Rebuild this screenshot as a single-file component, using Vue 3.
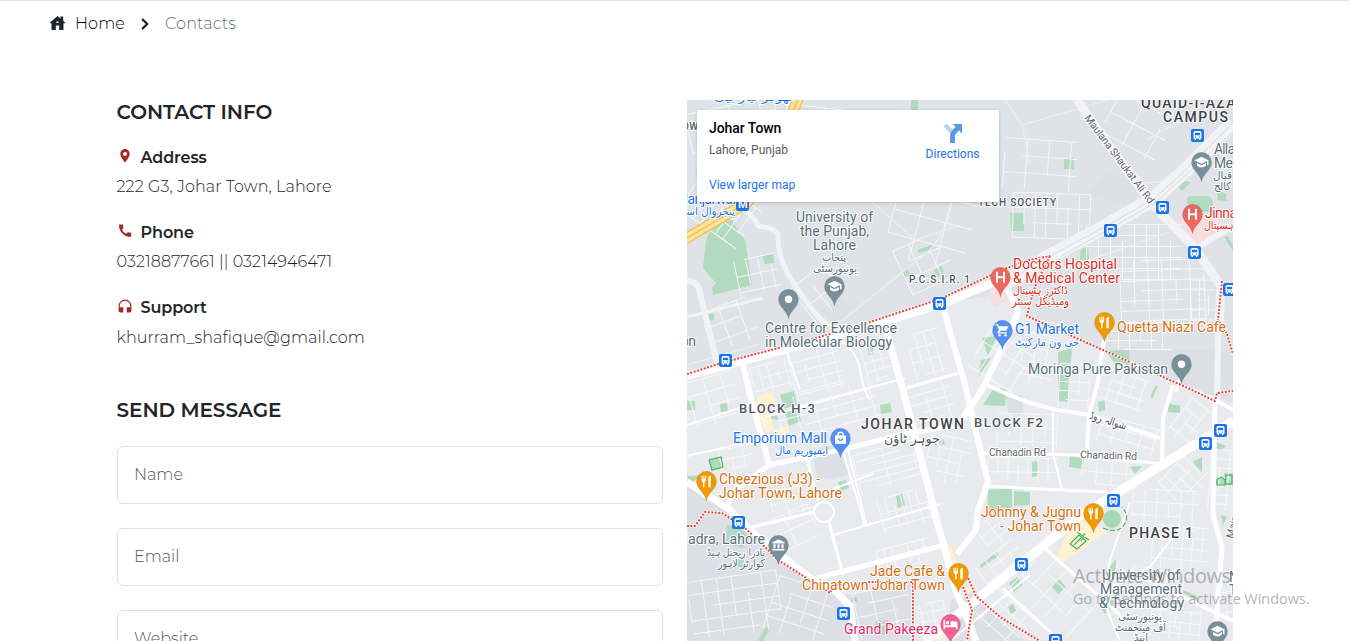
<script setup>
const contacts = [
  { icon: 'pin', title: 'Address', cls: 'addr', text: '222 G3, Johar Town, Lahore' },
  { icon: 'phone', title: 'Phone', cls: 'tel', text: '03218877661 || 03214946471' },
  { icon: 'headset', title: 'Support', cls: 'mail', text: 'khurram_shafique@gmail.com' },
]
const fields = ['Name', 'Email', 'Website']

// Residential blocks south of the rail line
const blocks = [
  'M687 376 845 332 940 304 1012 292 1028 317 1103 350 1190 390 1233 402V641H860L840 600 780 556 735 512 687 484Z',
]
const shades = [
  'M687 485 735 512 787 560 840 600 860 641H687Z',
  'M1095 185 1110 173 1142 186 1130 205 1088 196Z',
  'M812 450 839 444 848 475 818 482Z',
  'M1005 395h18v22l-14-4Z',
  'M842 596 912 583V641H858Z',
  'M1103 350 1190 390 1233 402V350H1120Z',
  'M950 600 975 590 1025 641H950Z',
  'M820 310 840 300 852 308 835 327Z',
]
const parks = [
  'M714 222 732 220 739 232 745 240 752 285 713 295 712 288 716 283 703 268 706 240Z',
  'M762 255l11-1 1 9-9 1Z', 'M705 314h9v6l-7 1Z', 'M911 100h7v10h-7Z',
  'M1064 158h10v11h-10Z', 'M1010 213h14v18h-13Z', 'M1176 185l10-8 4 6-8 8Z',
  'M1187 199c0-4 6-3 10-3h11q5 1 5 8l-3 8h-17q-6-3-6-13Z',
  'M1218 190l8 4 1 7-10-1Z', 'M1224 237l4-1 5 9v6Z',
  'M902 271l6-2 2 6-6 2Z', 'M917 250l15-5 3 3-15 5Z', 'M934 270l8-4 2 9-8 2Z',
  'M1081 249l7-2 1 13h-9Z', 'M868 346l5-1v9l-5 1Z',
  'M1105 351l24-1 1 15-16-3Z', 'M1058 352l14-4-4 54-10-1Z', 'M982 338l15-2-9 20Z',
  'M981 360l10-2-13 19Z', 'M780 395l14-4 7 30-12 5Z', 'M771 414l8 2v4l-8-1Z',
  'M687 401h8v9h-8Z', 'M720 404l7-1 1 8-7 1Z', 'M880 405l10-2 2 9-11 2Z',
  'M709 459l13-3 1 12-12 3Z', 'M687 476l15-1-12 9Z', 'M838 482l8-2 3 8-8 3Z',
  'M896 496l6-2 3 11-7 3Z', 'M939 440l4-2 2 6-5 2Z', 'M994 388l12 1-1 17-22-1Z',
  'M1098 402l7-2v10l-6 2Z', 'M1167 402l4 2 9 2v7l-12-1Z', 'M1150 397l5-11 3-1-5 13Z',
  'M1032 462l6-1v15l-6 1Z', 'M1070 456l12 2v11l-13-2Z', 'M1130 467l12-1-7 8Z',
  'M1193 462l9-5v16Z', 'M1216 442l10 4-5 5-6-2Z', 'M988 490l24-2v20l-25 5Z',
  'M1014 491l16 1v13l-16 1Z', 'M1224 473h9v12h-9Z', 'M1216 476h10v9h-11Z',
  'M980 564l17-12 1 4-17 12Z', 'M1009 583l8-6 6 7-9 8Z', 'M1051 586l8-7 7 8-8 7Z',
  'M1106 571l10-12-1 20Z', 'M1099 605l12-10 4 9-10 10Z', 'M1183 590l14 6 1 5-15-8Z',
  'M1008 607l5-3 3 7-5 3Z', 'M758 641l8-14 4 1-7 13Z', 'M727 525l12 2 12 12-9 9-16-5Z',
  'M852 598l5-1v5h-6Z', 'M875 622l13-2-4 15-8-1Z', 'M1221 515l6 2-4 8Z', 'M737 559l7-1v9h-6Z',
]
const sands = [
  'M758 396l15-4 3 10-8 3 6 25-7 3-12-24Z', 'M775 430l13-4 1 6-14 4Z',
  'M1068 531l15-10 24 9-30 24-22 8Z', 'M946 546l4-2 9 24-3 4Z', 'M962 590l12-7 2 5-13 9Z',
  'M1057 556l7-4 3 8-8 3Z', 'M930 637l22-14 3 5-17 13Z',
]
// Softer roads crossing the northern districts
const softRoads = [
  ['M742 208Q756 218 758 226 775 228 778 234Q777 253 787 272T820 319L838 331', 5],
  ['M687 281Q699 280 701 298L717 363', 6], ['M687 317 763 298', 3],
  ['M1077 100 1110 147 1153 205 1195 248 1221 286 1219 327', 9],
  ['M1000 286 1050 256 1110 224 1155 198 1190 166 1233 123', 15],
  ['M1190 252 1233 226', 6], ['M1219 290 1217 401', 6],
]
const mainRoads = [
  ['M687 376 725 366 845 333 940 305 1000 280', 8],
  ['M743 365 752 402 769 464', 6], ['M887 333 904 394 927 482 935 514 956 590 976 641', 7],
  ['M943 307 965 385 976 432 988 482 978 510 976 530 957 554', 6],
  ['M1008 290 1018 312 1001 350 982 390 959 424', 6],
  ['M962 424 900 435 845 449 769 465 735 490 725 509', 5],
  ['M1233 421 1160 466 1080 516 1027 559 925 641', 9],
  ['M984 486 1040 489 1107 492', 3], ['M985 384 1007 394 1027 402 1057 410 1089 415 1160 438', 4],
  ['M1104 340 1097 385 1089 415 1087 453', 4], ['M1173 385 1163 418 1162 463', 4],
  ['M980 453 1083 455 1162 464', 3], ['M1053 411 1053 453 1062 490', 2],
  ['M1215 398 1213 515 1222 547 1215 640', 5],
  ['M687 482 730 510 755 535 787 560 813 580', 7], ['M813 580 830 586 850 606 855 641', 7],
  ['M813 579 945 545', 5], ['M748 528 814 512', 3], ['M829 522 843 575', 3],
  ['M807 458 818 501', 3], ['M843 452 862 515', 2], ['M848 450 867 527', 2],
  ['M903 389 958 373', 3], ['M1043 547 1093 591 1122 617', 3], ['M1003 589 1060 641', 3],
  ['M1130 570 1172 592 1233 621', 4], ['M1110 588 1150 567 1178 530', 2],
  ['M1130 502 1110 560 1103 600 1120 641', 2], ['M950 641 1030 575', 2],
  ['M1183 365 1176 392', 3], ['M1193 390 1215 400 1233 410', 4],
  ['M687 425 749 405', 2], ['M687 456 766 438', 2], ['M765 417 905 378', 2],
  ['M835 336Q857 350 860 370T870 400', 2], ['M786 349 800 390', 2],
  ['M833 489 873 474', 2], ['M833 535 940 504', 2], ['M862 515 864 526', 2],
]
// Local street grids: centre, size, angle and spacing along both axes
const grids = [
  [735, 135, 90, 60, -12, 15, 13], [842, 155, 120, 90, 6, 19, 14], [720, 210, 70, 45, 35, 9, 15],
  [930, 230, 80, 70, 15, 27, 24], [1040, 165, 72, 50, 4, 22, 17], [1052, 216, 78, 45, 2, 11, 15],
  [1137, 128, 62, 48, 28, 26, 22], [1134, 252, 95, 55, 0, 12, 11], [1163, 292, 85, 64, -2, 14, 10],
  [1140, 336, 65, 27, 0, 11, 9], [1203, 305, 25, 50, 0, 9, 10], [758, 275, 42, 36, -12, 12, 16],
  [730, 325, 48, 42, -20, 19, 16], [821, 292, 45, 42, -38, 20, 24], [925, 264, 48, 50, -25, 17, 16],
  [772, 377, 40, 28, -15, 9, 12], [715, 400, 48, 48, -16, 18, 14], [817, 371, 50, 48, -15, 15, 10],
  [828, 409, 100, 42, -15, 19, 10], [878, 362, 27, 40, -16, 9, 9], [928, 354, 34, 46, -16, 9, 14],
  [932, 405, 45, 45, -16, 19, 9], [888, 467, 64, 40, -15, 30, 7], [948, 460, 42, 46, 12, 11, 12],
  [800, 500, 58, 28, -15, 15, 12], [738, 462, 34, 30, -12, 12, 10], [905, 510, 50, 34, -15, 8, 15],
  [905, 555, 55, 22, -15, 8, 11], [790, 530, 52, 34, -25, 26, 17], [1002, 361, 43, 52, -58, 14, 12],
  [1040, 353, 34, 64, 12, 12, 14], [1074, 386, 30, 44, 3, 10, 9], [1027, 430, 60, 32, 2, 12, 14],
  [1122, 390, 48, 32, 18, 11, 10], [1128, 436, 58, 28, 16, 14, 10], [1023, 470, 70, 24, 1, 10, 14],
  [1110, 473, 57, 24, 5, 15, 12], [1190, 423, 27, 42, 38, 10, 12], [1186, 480, 42, 36, -45, 9, 14],
  [1165, 510, 65, 40, 3, 12, 13], [1180, 548, 56, 43, 5, 10, 11], [1220, 480, 20, 60, 5, 9, 9],
  [997, 530, 34, 28, -38, 14, 10], [1001, 563, 46, 24, -38, 12, 10], [1056, 593, 75, 53, 43, 15, 18],
  [1003, 617, 54, 36, 42, 11, 11], [1150, 595, 76, 52, 12, 17, 13], [1175, 625, 50, 28, 6, 10, 11],
  [735, 605, 90, 58, -8, 15, 13], [800, 611, 60, 55, 18, 17, 14], [884, 611, 55, 46, -12, 19, 12],
  [935, 621, 24, 38, -12, 12, 9], [1225, 595, 18, 45, -10, 8, 10],
]
function street([cx, cy, w, h, angle, sx, sy], n) {
  let d = ''
  let i = 0
  for (let x = -w / 2; x <= w / 2; x += sx) {
    const from = (i * 3 + n) % 4 === 0 ? -h / 5 : -h / 2
    const to = (i + n) % 3 === 0 ? h / 5 : h / 2
    d += `M${x} ${from}V${to}`
    i++
  }
  for (let y = -h / 2; y <= h / 2; y += sy) {
    const from = (i + n) % 3 === 0 ? -w / 4 : -w / 2
    const to = (i * 2 + n) % 5 === 0 ? w / 4 : w / 2
    d += `M${from} ${y}H${to}`
    i++
  }
  return { d, t: `translate(${cx} ${cy}) rotate(${angle})` }
}
const streets = grids.map(street)

const rails = [
  'M687 374 725 362 790 345 845 330 870 322 940 299 1000 271 1024 261 1050 256',
  'M1050 256 1036 284 1030 303 1027 316 1103 350 1190 389 1215 401 1217 393 1233 391',
  'M1222 281 1218 320 1227 334 1233 354',
  'M687 526 695 526 705 512 722 513 745 528 763 545 778 560 830 593 834 585 870 582 913 582V641',
  'M968 578 976 596 1000 617 1018 628 1040 641', 'M963 587 972 610 967 641',
]
const buses = [[1197, 135], [1162, 207], [1110, 230], [939, 303], [725, 360], [1194, 252], [1229, 289], [1220, 430], [1205, 443], [1113, 500], [738, 522], [1021, 564], [843, 613], [1055, 640]]

const pins = [
  ['dot', '#78909c', 788, 299], ['grad', '#78909c', 834, 286], ['grad', '#78909c', 1201, 162],
  ['hosp', '#ee675c', 1192, 214], ['hosp', '#ee675c', 1000, 277], ['cart', '#5491f5', 1002, 330],
  ['fork', '#f29900', 1104, 322], ['dot', '#78909c', 1181, 364], ['bag', '#5491f5', 840, 438],
  ['fork', '#f29900', 706, 481], ['museum', '#78909c', 778, 545], ['fork', '#f29900', 1093, 513],
  ['fork', '#f29900', 958, 573], ['bed', '#f06292', 950, 624], ['grad', '#78909c', 1217, 631],
]

// text, left, width, baseline, class
const labels = [
  ['University of', 796, 77, 222, 'slate'], ['the Punjab,', 800, 69, 236, 'slate'], ['Lahore', 813, 43, 250, 'slate'],
  ['Centre for Excellence', 765, 132, 333, 'slate'], ['in Molecular Biology', 765, 127, 347, 'slate'],
  ['on', 681, 15, 346, 'slate'], ['Moringa Pure Pakistan', 1028, 140, 374, 'slate'],
  ['Nadra, Lahore', 678, 87, 544, 'slate'], ['Alla', 1214, 21, 154, 'slate'], ['Me', 1214, 19, 168, 'slate'],
  ['University of', 1102, 78, 580, 'slate'], ['Management', 1100, 82, 594, 'slate'], ['& Technology', 1099, 85, 608, 'slate'],
  ['N', 1229, 10, 582, 'slate'], ['T', 1229, 9, 595, 'slate'],
  ['Doctors Hospital', 1013, 104, 269, 'red'], ['& Medical Center', 1013, 107, 283, 'red'], ['Jinna', 1205, 32, 218, 'red'],
  ['G1 Market', 1015, 64, 334, 'blue'], ['Emporium Mall', 733, 94, 443, 'blue'], ['Manjarwal', 676, 60, 204, 'blue'],
  ['Quetta Niazi Cafe', 1117, 109, 332, 'amber'], ['Cheezious (J3) -', 719, 101, 484, 'amber'],
  ['Johar Town, Lahore', 719, 123, 498, 'amber'], ['Johnny & Jugnu', 981, 100, 517, 'amber'],
  ['- Johar Town', 1000, 81, 531, 'amber'], ['Jade Cafe &', 870, 75, 576, 'amber'],
  ['Chinatown Johar Town', 802, 143, 590, 'amber'], ['Grand Pakeeza', 844, 94, 634, 'pink'],
  ['QUAID-I-AZAM', 1141, 108, 108, 'area'], ['CAMPUS', 1163, 65, 122, 'area'],
  ['JOHAR TOWN', 861, 103, 429, 'area'], ['PHASE 1', 1129, 64, 538, 'area'],
  ['BLOCK H-3', 739, 76, 413, 'block'], ['BLOCK F2', 974, 69, 427, 'block'],
  ['TECH SOCIETY', 978, 78, 206, 'tiny'], ['P.C.S.I.R. 1', 909, 61, 283, 'tiny'], ['OW', 682, 16, 130, 'tiny'],
  ['Chanadin Rd', 989, 57, 456, 'road'],
]
const urdu = [
  ['پنجاب', 822, 24, 261, 'slate'], ['یونیورسٹی', 813, 44, 272, 'slate'],
  ['ڈاکٹرز ہسپتال', 1013, 55, 294, 'red'], ['ومیڈیکل سنٹر', 1012, 57, 305, 'red'],
  ['جی ون مارکیٹ', 1015, 64, 346, 'blue'], ['ایمپوریم مال', 775, 53, 454, 'blue'],
  ['جوہر ٹاؤن', 884, 56, 443, 'dark big'], ['پنجروال اسٹیشن', 663, 72, 215, 'blue'],
  ['نادرا ریجنل ہیڈ', 707, 58, 556, 'slate'], ['کوارٹر لاہور', 718, 47, 567, 'slate'],
  ['قبال', 1213, 19, 179, 'slate'], ['کالج', 1214, 17, 190, 'slate'], ['ہسپتال', 1204, 29, 229, 'red'],
  ['یونیورسٹی', 1118, 44, 620, 'slate'], ['آف مینجمنٹ', 1115, 51, 631, 'slate'], ['اینڈ', 1134, 14, 641, 'slate'],
  ['ٹھوکر نیاز بیگ', 714, 79, 101, 'blue'],
]
</script>

<template>
  <div class="page">
    <nav class="crumbs">
      <svg class="home" viewBox="0 0 15 14"><path d="M7.500 0 10.500 2.500V.5h2.700v4.200L15 6.500v.8h-1.500V14H9.200V9.500H5.800V14H1.500V7.300H0v-.8Z" /><path d="M6.400 5.500h2.200V7H6.400Z" fill="#fff" /></svg>
      <span class="t-home">Home</span>
      <svg class="chev" viewBox="0 0 8 12"><path d="M1.200 1 6.200 6l-5 5" /></svg>
      <span class="t-here">Contacts</span>
    </nav>

    <main class="content">
      <section class="left">
        <h2 class="h-info">CONTACT INFO</h2>
        <div v-for="c in contacts" :key="c.title" class="item">
          <h3>
            <svg class="ico" viewBox="0 0 24 24">
              <path v-if="c.icon === 'pin'" fill-rule="evenodd" d="M12 0C7 0 4 4 4 8.500 4 14 12 23 12 23s8-9 8-14.500C20 4 17 0 12 0Zm0 5a3.400 3.400 0 1 1 0 6.800A3.400 3.400 0 0 1 12 5Z" />
              <path v-else-if="c.icon === 'phone'" d="M6.200 10.800a16 16 0 0 0 7 7l2.400-2.400q.5-.5 1.200-.2 2 .7 4.200.7 1 0 1 1V22q0 1-1 1C10 23 1 14 1 3q0-1 1-1h5q1 0 1 1 0 2.200.7 4.200.3.700-.2 1.200Z" transform="translate(.6 -1)" />
              <path v-else d="M12 1A11 11 0 0 0 1 12v8a3 3 0 0 0 3 3h5v-9H3v-2a9 9 0 0 1 18 0v2h-6v9h5a3 3 0 0 0 3-3v-8A11 11 0 0 0 12 1Z" />
            </svg>
            <span>{{ c.title }}</span>
          </h3>
          <p :class="c.cls">{{ c.text }}</p>
        </div>
        <h2 class="h-send">SEND MESSAGE</h2>
        <form>
          <input v-for="f in fields" :key="f" :placeholder="f" />
        </form>
      </section>

      <section class="map">
        <svg class="canvas" viewBox="687 100 546 541">
          <rect x="687" y="100" width="546" height="541" fill="#dfe2e7" />
          <path v-for="b in blocks" :key="b" :d="b" fill="#e8eaed" />
          <path v-for="s in shades" :key="s" :d="s" fill="#dcdfe5" />
          <path d="M1175 222l30-8 28 12-25 16-22 4ZM988 292l9-9 10 6 2 11-14 7Z" fill="#f4dedf" />
          <path v-for="s in sands" :key="s" :d="s" fill="#fdf2d2" />
          <path v-for="p in parks" :key="p" :d="p" fill="#b1dabf" />
          <circle cx="1112" cy="519" r="9" fill="#a5d6b5" />
          <g fill="none" stroke="#f6f7f9" stroke-width="1">
            <path v-for="(s, i) in streets" :key="i" :d="s.d" :transform="s.t" />
          </g>
          <g fill="none" stroke="#eceef1" stroke-width="1.300">
            <path d="M834 327 930 250Q946 233 950 202M1005 100 1022 125 1108 100M1022 125 1030 165M1108 145 1145 183 1190 180M1060 270 1170 232M1147 140 1190 115M687 365 760 344M870 200 915 240 960 225" />
          </g>
          <g fill="none" stroke-linejoin="round">
            <path v-for="r in softRoads" :key="r[0]" :d="r[0]" stroke="#f2f3f6" :stroke-width="r[1]" />
            <path d="M1000 286 1050 256 1110 224 1155 198 1190 166 1233 123M1060 257 1155 203 1233 132" stroke="#d8dbe1" stroke-width="1" />
            <path v-for="r in mainRoads" :key="r[0]" :d="r[0]" stroke="#fff" :stroke-width="r[1]" />
            <circle cx="824" cy="512" r="10" fill="#e8eaed" stroke="#fff" stroke-width="2" />
            <path d="M680 242 748 202 777 155 799 96" stroke="#f5bd42" stroke-width="11" />
            <path d="M680 242 748 202 777 155 799 96" stroke="#fbe3a2" stroke-width="8.500" />
            <path d="M680 242 748 202 777 155 799 96" stroke="#f3bd4b" stroke-width="1.300" />
            <g stroke="#46ad67" stroke-width="1.100">
              <path d="M1070 544 1079 535 1086 541 1077 549ZM1074 545 1081 538M1077 532 1089 540M1085 533 1081 541" />
              <path d="M709 460 721 457 723 467 712 470ZM1217 480q4-5 8 0v5h-8ZM1226 475h6v9h-7Z" />
              <path d="M1103 528Q1118 534 1124 525T1122 507" stroke-dasharray="5 2" />
            </g>
            <path v-for="r in rails" :key="r" :d="r" stroke="#fff" stroke-width="3" />
            <path v-for="r in rails" :key="r + 'd'" :d="r" stroke="#ea4335" stroke-width="2" stroke-dasharray="2 1.500" />
          </g>

          <g v-for="b in buses" :key="b.join()" :transform="`translate(${b[0] + .5} ${b[1] + .5})`">
            <rect x="-6.500" y="-6.500" width="13" height="13" rx="2" fill="#1a73e8" />
            <path fill="#fff" fill-rule="evenodd" d="M-4-3q0-1.500 2-1.500h4q2 0 2 1.500v6H3v1.500H1.500V3h-3v1.500H-3V3h-1ZM-2.700-2.700v2.500h5.400v-2.500ZM-2.500 1v1h1.200v-1ZM1.300 1v1h1.200v-1Z" />
          </g>
          <rect x="736" y="198" width="13" height="13" rx="2" fill="#1a73e8" />
          <text x="738" y="208" class="metro">M</text>

          <text v-for="l in labels" :key="l[0] + l[3]" :x="l[1]" :y="l[3]" :textLength="l[2]" :class="['lb', l[4]]">{{ l[0] }}</text>
          <text v-for="l in urdu" :key="l[0] + l[3]" :x="l[1] + l[2] / 2" :y="l[3]" :textLength="l[2]" lengthAdjust="spacingAndGlyphs" :class="['ur', l[4]]">{{ l[0] }}</text>
          <text class="lb road" textLength="57" transform="translate(1080 458) rotate(2)">Chanadin Rd</text>
          <text class="lb road" textLength="108" transform="translate(1084 118) rotate(53)">Maulana Shaukat Ali Rd</text>
          <text class="ur dark" textLength="38" lengthAdjust="spacingAndGlyphs" transform="translate(1107 424) rotate(18)">شوالہ روڈ</text>
          <text class="lb road" transform="translate(1233 539) rotate(-76)">Main</text>

          <g v-for="p in pins" :key="p.join()" :transform="`translate(${p[2] + .5} ${p[3] + .3})`">
            <path d="M0 19.500C-1.500 11-10 8-10 0A10 10 0 0 1 10 0C10 8 1.500 11 0 19.500Z" :fill="p[1]" stroke="#0003" stroke-width=".5" />
            <circle v-if="p[0] === 'dot'" r="3.700" fill="#fff" />
            <path v-else-if="p[0] === 'grad'" fill="#fff" d="M0-5.500-7-2 0 1.500 5.500-1.200V3h1.500v-5ZM-4.500.8V3.500Q0 7 4.500 3.500V.8L0 3Z" />
            <path v-else-if="p[0] === 'hosp'" d="M-3.500-5.500V5.500M3.500-5.500V5.500M-3.500 0H3.500" stroke="#fff" stroke-width="2" />
            <g v-else-if="p[0] === 'cart'" fill="#fff"><path d="M-7-6h2.500l.8 2H6L3.700.5h-6L-3 2h7.500v1.300h-9L-5 1.500-3.500-.6-5.500-4.700H-7Z" /><circle cx="-3" cy="5" r="1.200" /><circle cx="3" cy="5" r="1.200" /></g>
            <path v-else-if="p[0] === 'fork'" fill="#fff" d="M-5-5.500h1v3h.8v-3h1v3h.8v-3h1v4Q-.4.3-2 .7V6h-1.500V.7Q-5 .3-5-1.500ZM1.800 6V-3.500Q2-5.500 4.300-5.500V6H3V1H2.900V6Z" />
            <g v-else-if="p[0] === 'bag'" fill="none" stroke="#fff"><path d="M-5-2.500H5V5H-5Z" fill="#fff" /><path d="M-2.500-2.500v-1a2.500 2.500 0 0 1 5 0v1" stroke-width="1.400" /><path d="M-2 0a2 2 0 0 0 4 0" stroke="#5491f5" stroke-width="1.300" /></g>
            <path v-else-if="p[0] === 'museum'" fill="#fff" d="M0-6 6-3v1.200H-6V-3ZM-5-1h2v4h-2ZM-1-1h2v4h-2ZM3-1h2v4h-2ZM-6 3.800H6v1.500H-6Z" />
            <path v-else fill="#fff" d="M-7-4.500h1.500V1H0v-4h4.500Q7-3 7-.500V5H5.500V3h-11v2H-7ZM-4.800-1.500a1.700 1.700 0 1 1 3.400 0 1.700 1.700 0 0 1-3.400 0Z" />
          </g>
        </svg>

        <div class="card">
          <div class="place">
            <strong>Johar Town</strong>
            <span>Lahore, Punjab</span>
            <a>View larger map</a>
          </div>
          <div class="dir">
            <svg viewBox="0 0 20 20"><path d="M2 2 10 10" stroke="#b3d1fa" stroke-width="4" /><path d="M9.500 20V13Q9.500 10.500 11.500 8.500L15.500 4.500" fill="none" stroke="#5c9ae8" stroke-width="5" /><path d="M9.500 1H19v9.500Z" fill="#5c9ae8" /></svg>
            <a>Directions</a>
          </div>
        </div>
      </section>
    </main>

    <div class="mark">
      <div class="m1">Activate Windows</div>
      <div class="m2">Go to Settings to activate Windows.</div>
    </div>
  </div>
</template>

<style>
html, body { margin: 0; overflow: hidden; background: #fff; }
</style>
<style scoped>
.page { position: relative; box-sizing: border-box; width: 1349px; height: 641px; overflow: hidden; border-top: 1px solid #f6dcd3; background: #fff; font-family: Montserrat, Inter, "Open Sans", sans-serif; color: #212529; font-size: 16px; font-weight: 300; white-space: nowrap; }
.crumbs { display: flex; align-items: center; height: 45px; padding-left: 50px; }
.home { width: 15px; height: 14px; fill: #212529; margin: 0 10px 2px 0; }
.t-home { width: 50px; color: #000; letter-spacing: .1px; }
.chev { width: 8px; height: 12px; margin: 1px 16px 0; fill: none; stroke: #111; stroke-width: 2; }
.t-here { color: #6c6c6c; letter-spacing: .15px; }
.content { display: flex; padding: 54px 0 0 117px; gap: 24px; }
.left { width: 546px; }
h2 { margin: 0 0 0 -.5px; font-size: 20px; line-height: 24px; font-weight: 600; letter-spacing: -.05px; }
h3 { display: flex; align-items: center; margin: 0; height: 24px; font-size: 16px; font-weight: 600; letter-spacing: -.1px; }
.ico { width: 14px; height: 14px; fill: #a52a2a; margin: 0 8.5px 3px 1px; }
.item { height: 75px; }
.item p { margin: 0 0 0 -.5px; padding-top: 6px; line-height: 24px; letter-spacing: .09px; }
.item .mail { padding-top: 7px; }
.h-info { margin-bottom: 21px; }
.h-send { margin-top: 28px; margin-bottom: 24px; }
form { display: flex; flex-direction: column; gap: 24px; }
input { box-sizing: border-box; height: 58px; width: 546px; border: 1px solid #dee2e6; border-radius: 6px; padding: 0 16px 2px; background: #fff; font: inherit; }
input::placeholder { color: #50575e; opacity: 1; }
.map { position: relative; width: 546px; height: 541px; overflow: hidden; font-family: Roboto, "Liberation Sans", sans-serif; font-weight: 400; }
.canvas { display: block; width: 546px; height: 541px; }
.lb { font-family: Roboto, sans-serif; font-size: 14px; paint-order: stroke; stroke: #fff; stroke-width: 2px; stroke-linejoin: round; }
.ur { font-family: "DejaVu Sans", sans-serif; font-size: 11px; text-anchor: middle; paint-order: stroke; stroke: #fff; stroke-width: 2px; direction: rtl; }
.slate { fill: #546e7a; }
.red { fill: #d93025; }
.blue { fill: #1a73e8; }
.amber { fill: #d56e0c; }
.pink { fill: #e91e63; }
.dark { fill: #50545a; }
.big { font-size: 13px; }
.area { fill: #3c4043; font-size: 14px; font-weight: 500; }
.block { fill: #50555a; font-size: 13px; font-weight: 500; }
.tiny { fill: #50555a; font-size: 10px; font-weight: 500; }
.road { fill: #5f6368; font-size: 10.5px; }
.metro { font: bold 11px Roboto, sans-serif; fill: #fff; }
.card { position: absolute; left: 10px; top: 10px; box-sizing: border-box; width: 302px; height: 92px; background: #fff; border-radius: 2px; box-shadow: 0 1px 4px -1px rgba(0, 0, 0, .3); display: flex; justify-content: space-between; padding: 9px 19.500px 0 12px; font-size: 12px; }
.place { display: flex; flex-direction: column; }
.place strong { font-size: 14px; line-height: 18px; font-weight: 500; color: #000; letter-spacing: -.05px; }
.place span { line-height: 16px; margin-top: 5px; color: #5b5b5b; }
.place a { line-height: 16px; margin-top: 19px; }
.card a { color: #1a73e8; }
.dir { display: flex; flex-direction: column; align-items: center; }
.dir svg { width: 20px; height: 20px; margin-top: 4px; }
.dir a { line-height: 16px; margin-top: 3px; }
.mark { position: absolute; left: 1073px; top: 561px; color: rgba(125, 125, 125, .58); font-family: "Open Sans", sans-serif; font-weight: 400; }
.m1 { font-size: 20px; line-height: 27px; letter-spacing: -.4px; }
.m2 { font-size: 14.5px; line-height: 20px; letter-spacing: -.03px; }
</style>
